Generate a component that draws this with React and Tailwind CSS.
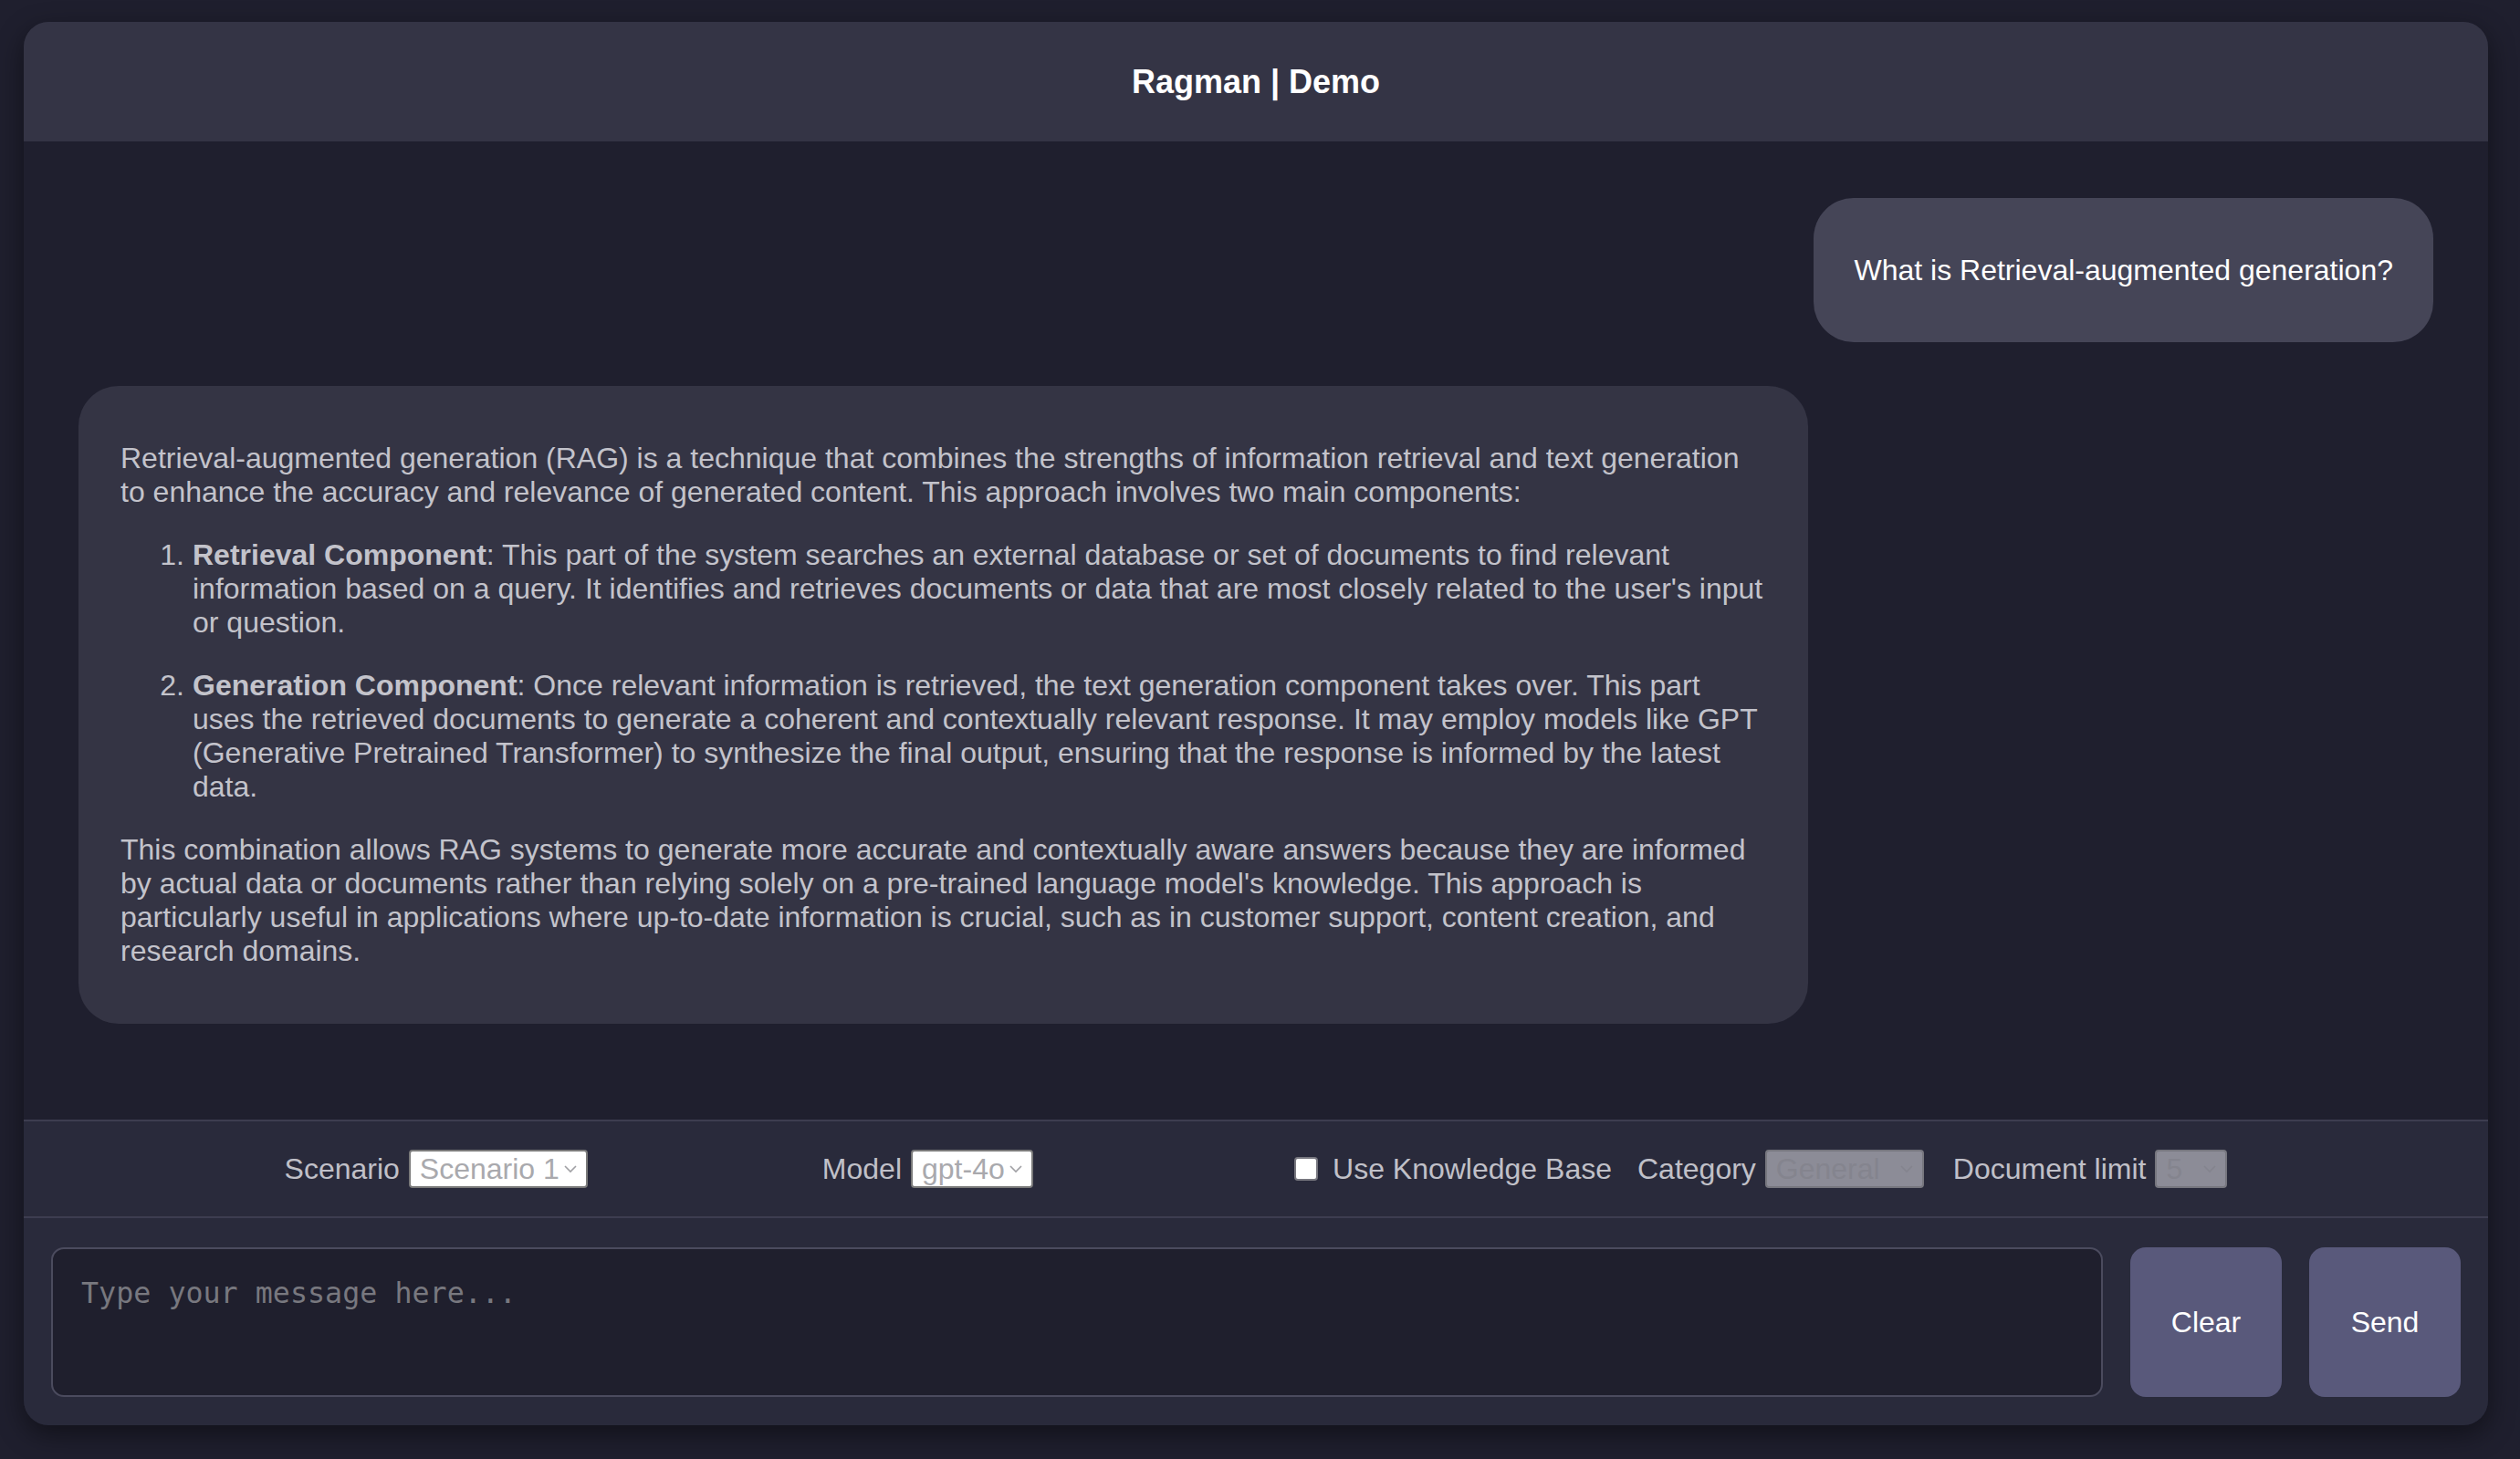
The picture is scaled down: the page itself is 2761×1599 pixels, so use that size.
import React from 'react';

const Chevron = ({ className = '' }) => (
  <svg width="16" height="10" viewBox="0 0 16 10" className={className} fill="none">
    <path d="M2 2l6 6 6-6" stroke="currentColor" strokeWidth="1.6" />
  </svg>
);

const Select = ({ value, width, disabled }) => (
  <div
    className={`flex items-center justify-between h-[42px] pl-[10px] pr-[9px] rounded-[4px] border-2 ${
      disabled ? 'bg-[#8c8c97] border-[#77777f] text-[#84848e]' : 'bg-white border-[#7a7a7a] text-[#a9a9ad]'
    }`}
    style={{ width }}
  >
    <span>{value}</span>
    <Chevron className={disabled ? 'text-[#84848e]' : 'text-[#a0a0a4]'} />
  </div>
);

const items = [
  {
    title: 'Retrieval Component',
    text: ": This part of the system searches an external database or set of documents to find relevant information based on a query. It identifies and retrieves documents or data that are most closely related to the user's input or question.",
  },
  {
    title: 'Generation Component',
    text: ': Once relevant information is retrieved, the text generation component takes over. This part uses the retrieved documents to generate a coherent and contextually relevant response. It may employ models like GPT (Generative Pretrained Transformer) to synthesize the final output, ensuring that the response is informed by the latest data.',
  },
];

export default function App() {
  return (
    <div className="min-h-screen bg-[#1f1f2e] pt-[24px] px-[26px] font-['Liberation_Sans',Arial,sans-serif] text-[32px] leading-[37px]">
      <div className="w-[2700px] h-[1538px] flex flex-col rounded-[27px] overflow-hidden bg-[#1f1f2e] shadow-[0_10px_30px_rgba(0,0,0,0.45)]">
        <header className="h-[131px] shrink-0 bg-[#343445] flex items-center justify-center">
          <h1 className="text-white font-bold text-[36px]">Ragman | Demo</h1>
        </header>

        <main className="h-[1072px] shrink-0 px-[60px] pt-[62px] flex flex-col gap-[48px]">
          <div className="self-end rounded-[44px] bg-[#454557] text-white px-[44px] h-[158px] flex items-center">
            What is Retrieval-augmented generation?
          </div>

          <div className="w-[1895px] rounded-[44px] bg-[#343444] text-[#c3c3cb] pl-[46px] pr-[50px] py-[61px] flex flex-col gap-[32px]">
            <p>
              Retrieval-augmented generation (RAG) is a technique that combines the strengths of information retrieval and text
              generation to enhance the accuracy and relevance of generated content. This approach involves two main components:
            </p>
            <ol className="space-y-[32px] -mr-[6px]">
              {items.map((item, idx) => (
                <li key={idx} className="flex gap-[9px]">
                  <span className="w-[70px] shrink-0 text-right">{idx + 1}.</span>
                  <span>
                    <strong className="font-bold">{item.title}</strong>
                    {item.text}
                  </span>
                </li>
              ))}
            </ol>
            <p>
              This combination allows RAG systems to generate more accurate and contextually aware answers because they are informed
              by actual data or documents rather than relying solely on a pre-trained language model's knowledge. This approach is
              particularly useful in applications where up-to-date information is crucial, such as in customer support, content
              creation, and research domains.
            </p>
          </div>
        </main>

        <div className="h-[108px] shrink-0 bg-[#292a3b] border-y-2 border-[#3d3d50] flex items-center justify-center text-[#c0c0c8]">
          <div className="flex items-center gap-[10px]">
            <span>Scenario</span>
            <Select value="Scenario 1" width={196} />
          </div>
          <div className="flex items-center gap-[10px] ml-[257px]">
            <span>Model</span>
            <Select value="gpt-4o" width={134} />
          </div>
          <div className="flex items-center ml-[286px]">
            <span className="w-[26px] h-[26px] rounded-[4px] bg-white border-2 border-[#77777f]" />
            <span className="ml-[16px]">Use Knowledge Base</span>
            <span className="ml-[28px]">Category</span>
            <div className="ml-[10px]">
              <Select value="General" width={174} disabled />
            </div>
            <span className="ml-[32px]">Document limit</span>
            <div className="ml-[10px]">
              <Select value="5" width={79} disabled />
            </div>
          </div>
        </div>

        <div className="flex-1 bg-[#292a3b] px-[30px] pt-[32px] pb-[31px] flex gap-[30px]">
          <textarea
            placeholder="Type your message here..."
            className="flex-1 h-[164px] resize-none rounded-[14px] border-2 border-[#4b4b5e] bg-[#1f1f2d] px-[31px] py-[30px] font-['DejaVu_Sans_Mono',monospace] text-[31.7px] leading-[37px] text-[#d0d0d8] placeholder:text-[#78787f] outline-none"
          />
          <button className="w-[166px] h-[164px] rounded-[17px] bg-[#59597b] text-white">Clear</button>
          <button className="w-[166px] h-[164px] rounded-[17px] bg-[#59597b] text-white">Send</button>
        </div>
      </div>
    </div>
  );
}
